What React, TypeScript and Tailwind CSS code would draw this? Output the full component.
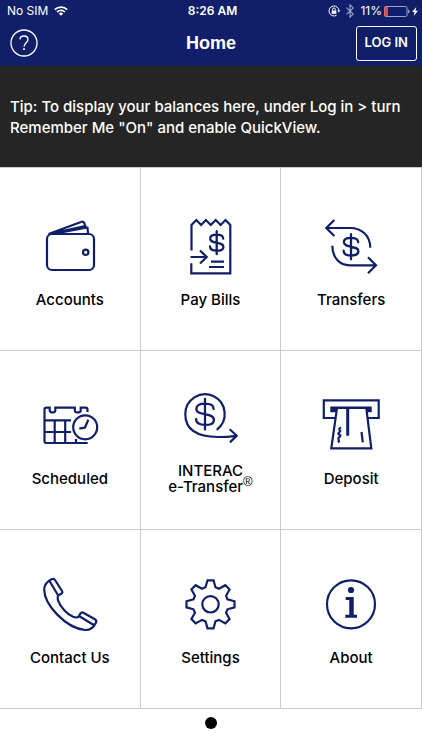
import type { ReactNode } from "react";

const gearPoints = Array.from({ length: 8 }, (_, i) => {
  const a = (i * Math.PI) / 4;
  return [
    [-5, -17],
    [-3, -24],
    [3, -24],
    [5, -17],
  ]
    .map(([x, y]) => {
      const px = 30.5 + x * Math.cos(a) - y * Math.sin(a);
      const py = 30.3 + x * Math.sin(a) + y * Math.cos(a);
      return `${px.toFixed(2)},${py.toFixed(2)}`;
    })
    .join(" ");
}).join(" ");

function Icon({ children }: { children: ReactNode }) {
  return (
    <svg
      viewBox="0 0 60 60"
      className="size-[60px] shrink-0 overflow-visible text-[#111f6b]"
      fill="none"
      stroke="currentColor"
      strokeWidth="2.2"
      aria-hidden="true"
    >
      {children}
    </svg>
  );
}

function Dollar({ x, y, scale = 1 }: { x: number; y: number; scale?: number }) {
  return (
    <g
      transform={`translate(${x} ${y}) scale(${scale})`}
      strokeWidth={2.3 / scale}
      strokeLinecap="round"
    >
      <path d="M0-11.5V11.5M6.5-4C6.5-6.8 4-8 0-8S-6.5-6.8-6.5-4.2C-6.5-1.2-3.5-.7 0 0S6.7 1.2 6.7 4.2 4 8 0 8-6.7 6.8-6.7 3.6" />
    </g>
  );
}

const tiles = [
  {
    label: "Accounts",
    icon: (
      <Icon>
        <rect x="7" y="18" width="47" height="36" rx="5" />
        <circle cx="45.7" cy="36.3" r="2.7" />
        <path
          d="M8.5 18 41 6c2-.8 3.2 0 4 3l1 3M9 18l36-8M18 17l29.5-5.500.5 6.500"
          strokeLinejoin="round"
        />
      </Icon>
    ),
  },
  {
    label: "Pay Bills",
    icon: (
      <Icon>
        <path d="M11.5 34.5V9l4.8-5 4.8 5 4.8-5 4.9 5 4.9-5 4.9 5 4.9-5 4.8 5v48.3h-39v-10" />
        <path d="M10.5 41h16M20 34.5l6.7 6.5-6.7 6.5" />
        <path d="M31 45.7h13M29 51h15" />
        <Dollar x={36.7} y={26.7} />
      </Icon>
    ),
  },
  {
    label: "Transfers",
    icon: (
      <Icon>
        <path d="M13.3 4 5.3 12l8 8M5.5 12H29c12 0 20.3 8 20.3 19.7M47 41.3l8 8-8 8M55 49.3H29C18 49.3 11.3 41 11.3 29.7" />
        <Dollar x={30} y={30.7} scale={1.1} />
      </Icon>
    ),
  },
  {
    label: "Scheduled",
    icon: (
      <Icon>
        <path d="M47.5 17v-2.5c0-1.200-.6-1.800-1.800-1.800h-5v2.600c0 1.200-.8 2-2 2h-1.900c-1.200 0-2-.8-2-2v-2.600H15.300v2.600c0 1.200-.8 2-2 2h-1.600c-1.200 0-2-.8-2-2v-2.600H6.500c-1.200 0-2 .8-2 2V46c0 1.200.8 2 2 2h41.200" />
        <path d="M4.5 25.3H31M4.5 37H31M14.7 25.3V48M25.2 25.3V48M36 44v4" />
        <circle cx="45.2" cy="32.3" r="12" />
        <path d="m48.3 24.7-3.3 7.8-5.7 1.2" />
      </Icon>
    ),
  },
  {
    label: (
      <>
        INTERAC
        <br />
        e-Transfer
        <sup className="font-['Liberation_Sans',sans-serif] text-[13px] leading-none font-normal">
          ®
        </sup>
      </>
    ),
    icon: (
      <Icon>
        <path d="M36.7 34.8A19.7 19.7 0 1 0 5.3 19.3C5.3 35 17 41.8 38 42q9.5 0 18.5-1.2M49.7 34.3l7 6.5-6.8 6.6" />
        <Dollar x={25} y={19.3} scale={1.33} />
      </Icon>
    ),
  },
  {
    label: "Deposit",
    icon: (
      <Icon>
        <path d="M2.8 5.3h54.9V23H2.8z" />
        <path d="M9.3 11.5h41.4v5.8H9.3z" fill="currentColor" stroke="none" />
        <path d="M16 13h29.3l5 40.3H10.3z" fill="white" />
        <path d="M26.7 13v27.7" strokeWidth="3" />
        <path d="M20 32.5c-3 1.5-1.5 2.5-.8 3.2.8 1-2.8 1.8-1.8 3.3.8 1 2.6.7 1.8 2.2-.7 1.2-2.6 1.3-1.7 3 .7 1.3.9 2-.5 3.3M40.5 37l1.3 10.3" />
      </Icon>
    ),
  },
  {
    label: "Contact Us",
    icon: (
      <Icon>
        <path
          strokeLinejoin="round"
          d="M11.5 5.3c1.7-1 2.8-.6 3.7.9L22 17c.8 1.2.4 2-.8 2.7l-2.8 1.7c-1 .8-1 2.2-.3 5.3 2.2 6.3 9.2 13.8 15 16.1 3 1 4.5.9 5.4-.1l2-3.3c.8-1.2 1.7-1.4 2.9-.7l11.5 6.5c1.5.9 1.8 1.9 1 3.5-2.4 5-5.9 7.6-10.9 7.3C25.5 54 4.2 30.5 4.2 15.5c0-4.5 3-8 7.3-10.2ZM9.5 7l8.7 14.5M39 42l14.7 9"
        />
      </Icon>
    ),
  },
  {
    label: "Settings",
    icon: (
      <Icon>
        <polygon points={gearPoints} />
        <circle cx="30.5" cy="30.3" r="8.2" />
      </Icon>
    ),
  },
  {
    label: "About",
    icon: (
      <Icon>
        <circle cx="30" cy="30.3" r="24" />
        <circle cx="30" cy="16" r="3.1" fill="currentColor" stroke="none" />
        <path d="M24.7 24.5h6.5M24.3 42.3h11.7" strokeWidth="3" />
        <path d="M30.5 23v19" strokeWidth="4.5" />
      </Icon>
    ),
  },
];

function StatusBar() {
  return (
    <div className="grid h-5 grid-cols-3 items-center pt-[2px] pr-1 pl-[7px] text-xs">
      <div className="flex items-center gap-[6px]">
        No SIM
        <svg
          viewBox="0 0 14 10"
          className="h-[10px] w-[14px]"
          fill="none"
          stroke="currentColor"
          strokeWidth="1.7"
        >
          <path d="M.8 3.6a8.800 8.800 0 0 1 12.4 0M3 6a5.700 5.700 0 0 1 8 0" />
          <path d="M7 9.8 4.7 7.5a3.300 3.300 0 0 1 4.6 0z" fill="currentColor" stroke="none" />
        </svg>
      </div>
      <div className="text-center font-semibold">8:26 AM</div>
      <div className="flex items-center justify-end">
        <svg
          viewBox="0 0 12 12"
          className="mr-[6px] size-3 shrink-0"
          fill="none"
          stroke="currentColor"
          strokeWidth="1"
        >
          <path d="M8.5 10.3A5 5 0 1 1 11 6" />
          <path d="m9.300 5.500 1.600 2 1.100-2z" fill="currentColor" stroke="none" />
          <path d="M3.7 5.5h4.6v3.300H3.700z" fill="currentColor" stroke="none" />
          <path d="M4.7 5.5V4.300a1.300 1.300 0 0 1 2.600 0v1.200" />
        </svg>
        <svg
          viewBox="0 0 8 14"
          className="mr-[6px] h-[14px] w-2 shrink-0 text-[#9da3cb]"
          fill="none"
          stroke="currentColor"
          strokeWidth="1.1"
        >
          <path d="m.5 3.7 6.7 6.4L4 13.2V.8l3.2 3.1L.5 10.3" />
        </svg>
        <span className="mr-[2px]">11%</span>
        <svg viewBox="0 0 26 11" className="mr-[2px] h-[11px] w-[26px] shrink-0">
          <rect x=".5" y=".5" width="22.5" height="10" rx="1.5" fill="none" stroke="#9da3cb" />
          <path d="M.5 1h3.500v9H.5z" fill="#f0443c" />
          <path d="M24 3.5c2 .5 2 3.5 0 4z" fill="#9da3cb" />
        </svg>
        <svg viewBox="0 0 6 9" className="h-[9px] w-[6px] shrink-0" fill="currentColor">
          <path d="M4.3 0 0 5h2.5L1.7 9 6 3.800H3.500z" />
        </svg>
      </div>
    </div>
  );
}

export default function App() {
  return (
    <div className="min-h-screen bg-white font-['Inter',sans-serif] text-black">
      <header className="bg-[#111f6b] text-white">
        <StatusBar />
        <div className="grid h-[46px] grid-cols-[1fr_auto_1fr] items-center px-[5px]">
          <button type="button" aria-label="Help" className="justify-self-start p-[5px]">
            <svg
              viewBox="0 0 28 28"
              className="size-7"
              fill="none"
              stroke="currentColor"
              strokeWidth="1.3"
            >
              <circle cx="14" cy="14" r="13" />
              <path d="M10 10.5C10 8.2 11.5 7 14 7s4 1.4 4 3.6c0 3.2-4 3.2-4 7.2" />
              <path d="M14 19.3v1.8" strokeWidth="1.8" />
            </svg>
          </button>
          <h1 className="font-['Liberation_Sans',sans-serif] text-lg font-bold">Home</h1>
          <button
            type="button"
            className="h-[35px] justify-self-end rounded-[3px] border border-white px-2 text-[13px] font-semibold"
          >
            LOG IN
          </button>
        </div>
      </header>

      <p className="bg-[#252525] px-[10px] pt-[30px] pb-[29px] text-[15px] leading-[21px] font-medium text-white">
        Tip: To display your balances here, under Log in &gt; turn Remember Me "On" and enable
        QuickView.
      </p>

      <nav className="grid grid-cols-3 border-t border-[#cccccc]">
        {tiles.map((tile, i) => (
          <button
            key={i}
            type="button"
            className={`flex flex-col items-center gap-2 border-r border-b border-[#cccccc] pb-[34px] ${
              i < 3 ? "pt-12" : "pt-11"
            }`}
          >
            {tile.icon}
            <span className="flex h-8 items-center text-[15px] leading-4 font-medium">
              <span>{tile.label}</span>
            </span>
          </button>
        ))}
      </nav>

      <div className="flex justify-center pt-2">
        <span className="size-3 rounded-full bg-black" />
      </div>
    </div>
  );
}
